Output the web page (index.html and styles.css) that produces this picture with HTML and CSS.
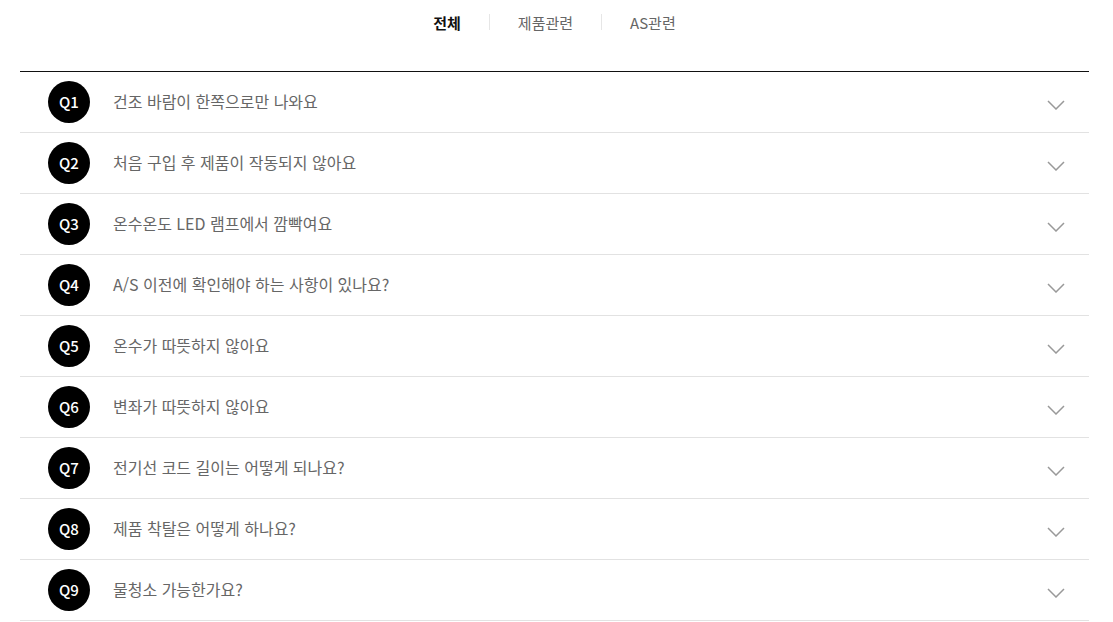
FILE: index.html
```html
<!DOCTYPE html>
<html lang="ko">
<head>
    <meta charset="UTF-8" />
    <meta name="viewport" content="width=device-width, initial-scale=1" />
    <title>FAQ</title>
    <link rel="stylesheet" href="styles.css">
</head>
<body>
    <nav class="tabs">
        <a class="tab active" href="#">전체</a>
        <span class="tab-sep"></span>
        <a class="tab" href="#">제품관련</a>
        <span class="tab-sep"></span>
        <a class="tab" href="#">AS관련</a>
    </nav>

    <ul class="faq">
        <li class="faq-item"><span class="q">Q1</span><span class="title">건조 바람이 한쪽으로만 나와요</span><svg class="chev" viewBox="0 0 18 10"><path d="M1 1l8 8 8-8"/></svg></li>
        <li class="faq-item"><span class="q">Q2</span><span class="title">처음 구입 후 제품이 작동되지 않아요</span><svg class="chev" viewBox="0 0 18 10"><path d="M1 1l8 8 8-8"/></svg></li>
        <li class="faq-item"><span class="q">Q3</span><span class="title">온수온도 LED 램프에서 깜빡여요</span><svg class="chev" viewBox="0 0 18 10"><path d="M1 1l8 8 8-8"/></svg></li>
        <li class="faq-item"><span class="q">Q4</span><span class="title">A/S 이전에 확인해야 하는 사항이 있나요?</span><svg class="chev" viewBox="0 0 18 10"><path d="M1 1l8 8 8-8"/></svg></li>
        <li class="faq-item"><span class="q">Q5</span><span class="title">온수가 따뜻하지 않아요</span><svg class="chev" viewBox="0 0 18 10"><path d="M1 1l8 8 8-8"/></svg></li>
        <li class="faq-item"><span class="q">Q6</span><span class="title">변좌가 따뜻하지 않아요</span><svg class="chev" viewBox="0 0 18 10"><path d="M1 1l8 8 8-8"/></svg></li>
        <li class="faq-item"><span class="q">Q7</span><span class="title">전기선 코드 길이는 어떻게 되나요?</span><svg class="chev" viewBox="0 0 18 10"><path d="M1 1l8 8 8-8"/></svg></li>
        <li class="faq-item"><span class="q">Q8</span><span class="title">제품 착탈은 어떻게 하나요?</span><svg class="chev" viewBox="0 0 18 10"><path d="M1 1l8 8 8-8"/></svg></li>
        <li class="faq-item"><span class="q">Q9</span><span class="title">물청소 가능한가요?</span><svg class="chev" viewBox="0 0 18 10"><path d="M1 1l8 8 8-8"/></svg></li>
    </ul>
</body>
</html>
```

FILE: styles.css
```css
body {
    margin: 0;
    padding: 0 24px 0 20px;
    background: #fff;
    color: #555;
    font-family: "Noto Sans CJK KR", "Noto Sans", sans-serif;
}
.tabs {
    display: flex;
    justify-content: center;
    align-items: center;
    height: 44px;
    margin-bottom: 27px;
}
.tab {
    font-size: 15px;
    color: #666;
    text-decoration: none;
}
.tab.active {
    font-weight: bold;
    color: #111;
}
.tab-sep {
    width: 1px;
    height: 16px;
    background: #e6e6e6;
    margin: 0 28px;
}
.faq {
    list-style: none;
    margin: 0;
    padding: 0;
    border-top: 1px solid #111;
}
.faq-item {
    display: flex;
    align-items: center;
    height: 60px;
    padding: 0 24px 0 28px;
    border-bottom: 1px solid #e2e2e2;
}
.q {
    width: 42px;
    height: 42px;
    border-radius: 50%;
    background: #000;
    color: #fff;
    font-size: 15px;
    font-weight: 500;
    line-height: 1;
    display: flex;
    align-items: center;
    justify-content: center;
    flex-shrink: 0;
    margin-right: 23px;
    padding-bottom: 2px;
    box-sizing: border-box;
}
.title {
    flex: 1;
    font-size: 16px;
    color: #666;
    margin-top: -2px;
}
.chev {
    width: 18px;
    height: 10px;
    margin-top: 6px;
    fill: none;
    stroke: #999;
    stroke-width: 1.5;
}
```
